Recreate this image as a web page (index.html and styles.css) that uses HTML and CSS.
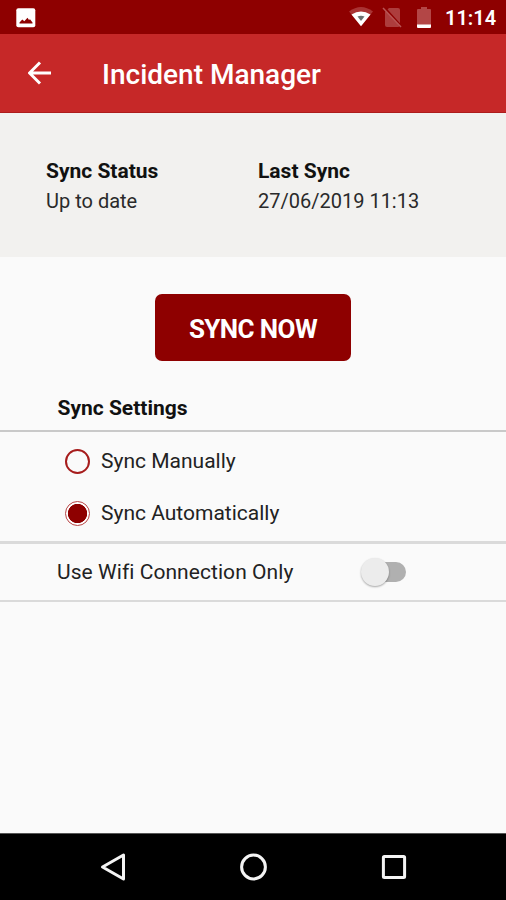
FILE: index.html
```html
<!DOCTYPE html>
<html lang="en">
<head>
<meta charset="utf-8">
<title>Incident Manager</title>
<link rel="stylesheet" href="styles.css">
</head>
<body>
<div class="status-bar">
  <svg class="picture" width="20" height="20" viewBox="0 0 20 20"><rect x=".3" y=".3" width="19" height="19" rx="2" fill="#fff"/><path d="M3.500 15.500v-1l2.800-3 2 1.800 3.200-3.500 1.500 2.200 1-.8 2.500 3.300v1z" fill="#8e0000"/></svg>
  <svg class="wifi" width="26" height="22" viewBox="0 0 26 22"><path d="M1 5.500Q13-3.500 25 5.500L13 20z" fill="#a93333"/><path d="M3.500 8.500Q13 2.500 22.500 8.500L13 20.300z" fill="#fff"/><path d="M9.500 10.500Q13 9 16.500 10.500L13 15z" fill="#6b7272"/></svg>
  <svg class="sim" width="20" height="22" viewBox="0 0 20 22"><path d="M7 1h9a2 2 0 0 1 2 2v15a2 2 0 0 1-2 2H5a2 2 0 0 1-2-2V5z" fill="#ad3d3d"/><path d="M2 0L20 20" stroke="#8e0000" stroke-width="2"/><path d="M1 1l18 19" stroke="#b95555" stroke-width="1.500"/></svg>
  <svg class="battery" width="14" height="22" viewBox="0 0 14 22"><path d="M4 0h6v2h3a1 1 0 0 1 1 1v15H0V3a1 1 0 0 1 1-1h3z" fill="#b34646"/><path d="M0 17.500h14V20a1 1 0 0 1-1 1H1a1 1 0 0 1-1-1z" fill="#fff"/></svg>
  <span class="clock">11:14</span>
</div>
<header class="app-bar">
  <svg class="back" width="24" height="24" viewBox="0 0 24 24"><path d="M23 12H2M12 1.500L1.500 12 12 22.500" fill="none" stroke="#fff" stroke-width="3"/></svg>
  <h1 class="title">Incident Manager</h1>
</header>
<section class="summary">
  <div class="state"><h2 class="label">Sync Status</h2><p class="value">Up to date</p></div>
  <div class="last"><h2 class="label">Last Sync</h2><p class="value">27/06/2019 11:13</p></div>
</section>
<main class="content">
  <button class="sync" type="button"><span>SYNC NOW</span></button>
  <h2 class="settings">Sync Settings</h2>
  <div class="options">
    <div class="option"><span class="radio"></span><span>Sync Manually</span></div>
    <div class="option"><span class="radio checked"></span><span>Sync Automatically</span></div>
  </div>
  <div class="wifi-row"><span class="wifi-text">Use Wifi Connection Only</span><span class="switch"><span class="thumb"></span></span></div>
</main>
<nav class="nav-bar">
  <svg width="28" height="30" viewBox="0 0 28 30"><path d="M24.500 3v24L3.500 15z" fill="none" stroke="#f4f4f4" stroke-width="3" stroke-linejoin="round"/></svg>
  <svg width="28" height="30" viewBox="0 0 28 30"><circle cx="13.500" cy="15" r="11.900" fill="none" stroke="#f4f4f4" stroke-width="3"/></svg>
  <svg width="28" height="30" viewBox="0 0 28 30"><rect x="3.400" y="4.400" width="21.200" height="21.200" rx="1" fill="none" stroke="#f4f4f4" stroke-width="3"/></svg>
</nav>
</body>
</html>
```
FILE: styles.css
```css
* { box-sizing: border-box; }
body { margin: 0; height: 900px; display: flex; flex-direction: column; overflow: hidden; background: #fafafa; color: #111; font-family: Roboto, sans-serif; }
h1, h2, p { margin: 0; }
svg { display: block; flex: none; }
span, h1, h2, p { white-space: nowrap; }
.status-bar { height: 34px; flex: none; background: #8e0000; display: flex; align-items: center; padding: 0 0 0 16px; }
.picture { margin-top: 1px; }
.wifi { margin-left: 312px; }
.sim { margin: 1px 0 0 8px; }
.battery { margin: 2px 0 0 15px; }
.clock { margin: 2px 0 0 14px; color: #fff; font-size: 20px; font-weight: 600; line-height: 24px; }
.app-bar { height: 79px; flex: none; background: #c62828; border-bottom: 1px solid #ad1c1c; display: flex; align-items: center; padding: 2px 0 0 28px; }
.back { margin-top: -2px; }
.title { margin: 2px 0 0 50px; color: #fff; font-size: 28px; line-height: 32px; font-weight: 500; }
.summary { height: 144px; flex: none; background: #f2f1ef; display: flex; padding: 43px 0 0 46px; }
.state { width: 212px; }
.label { font-size: 21px; line-height: 30px; font-weight: 700; }
.value { font-size: 20px; line-height: 30px; color: #2a2a2a; }
.content { flex: 1; display: flex; flex-direction: column; padding-top: 37px; }
.sync { width: 196px; height: 67px; margin-left: 155px; border: 0; border-radius: 7px; background: #8e0000; color: #fff; font: 700 26px/30px Roboto, sans-serif; letter-spacing: -.6px; padding: 3px 0 0; }
.settings { margin-top: 32px; padding-left: 57.500px; font-size: 21px; line-height: 30px; height: 37px; font-weight: 700; }
.options { height: 114px; border-top: 2px solid #c9c9c9; border-bottom: 3px solid #dadada; padding-top: 3px; }
.option { height: 52px; display: flex; align-items: center; padding-left: 65px; gap: 11px; font-size: 21px; color: #222; }
.radio { width: 25px; height: 25px; flex: none; border: 2px solid #a61c1c; border-radius: 50%; }
.checked { border: 1px solid #b74444; background: radial-gradient(circle, #8e0000 9.300px, #fff 10px); }
.wifi-row { height: 58px; display: flex; align-items: center; padding-left: 57px; border-bottom: 2px solid #dadada; font-size: 21px; color: #222; letter-spacing: .06px; }
.wifi-text { width: 307px; }
.switch { width: 42px; height: 20px; border-radius: 10px; background: #b0b0b0; display: flex; align-items: center; }
.thumb { width: 28px; height: 28px; flex: none; margin-left: -3px; border-radius: 50%; background: #ececec; box-shadow: 0 1px 2px #0005; }
.nav-bar { height: 67px; flex: none; background: #000; border-top: 1px solid #555; display: flex; justify-content: space-between; align-items: center; padding: 0 98px 1px 99px; }
```
